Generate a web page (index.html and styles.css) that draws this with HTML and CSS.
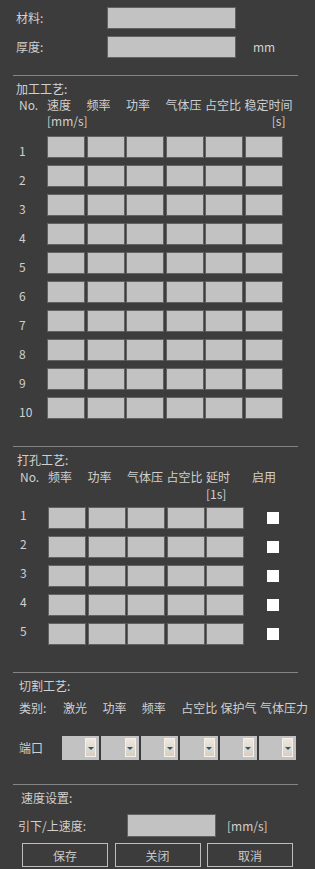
FILE: index.html
```html
<!DOCTYPE html>
<html lang="zh-CN">
<head>
    <meta charset="UTF-8">
    <title>工艺参数</title>
    <link rel="stylesheet" href="styles.css">
</head>
<body>
    <div class="form">
        <div class="form-row">
            <span class="form-label">材料:</span>
            <input class="field" type="text">
        </div>
        <div class="form-row">
            <span class="form-label">厚度:</span>
            <input class="field" type="text">
            <span class="unit">mm</span>
        </div>
    </div>

    <div class="divider"></div>

    <!-- 加工工艺 -->
    <div class="section-title process-title">加工工艺:</div>
    <div class="process-cols thead process-head">
        <span class="head-no">No.</span>
        <span>速度</span>
        <span>频率</span>
        <span>功率</span>
        <span>气体压</span>
        <span>占空比</span>
        <span>稳定时间</span>
    </div>
    <div class="process-cols thead thead-units">
        <span></span>
        <span>[mm/s]</span>
        <span></span>
        <span></span>
        <span></span>
        <span></span>
        <span class="head-end">[s]</span>
    </div>
    <div class="process-cols tbody process-body">
        <span class="num">1</span><input class="field" type="text"><input class="field" type="text"><input class="field" type="text"><input class="field" type="text"><input class="field" type="text"><input class="field" type="text">
        <span class="num">2</span><input class="field" type="text"><input class="field" type="text"><input class="field" type="text"><input class="field" type="text"><input class="field" type="text"><input class="field" type="text">
        <span class="num">3</span><input class="field" type="text"><input class="field" type="text"><input class="field" type="text"><input class="field" type="text"><input class="field" type="text"><input class="field" type="text">
        <span class="num">4</span><input class="field" type="text"><input class="field" type="text"><input class="field" type="text"><input class="field" type="text"><input class="field" type="text"><input class="field" type="text">
        <span class="num">5</span><input class="field" type="text"><input class="field" type="text"><input class="field" type="text"><input class="field" type="text"><input class="field" type="text"><input class="field" type="text">
        <span class="num">6</span><input class="field" type="text"><input class="field" type="text"><input class="field" type="text"><input class="field" type="text"><input class="field" type="text"><input class="field" type="text">
        <span class="num">7</span><input class="field" type="text"><input class="field" type="text"><input class="field" type="text"><input class="field" type="text"><input class="field" type="text"><input class="field" type="text">
        <span class="num">8</span><input class="field" type="text"><input class="field" type="text"><input class="field" type="text"><input class="field" type="text"><input class="field" type="text"><input class="field" type="text">
        <span class="num">9</span><input class="field" type="text"><input class="field" type="text"><input class="field" type="text"><input class="field" type="text"><input class="field" type="text"><input class="field" type="text">
        <span class="num">10</span><input class="field" type="text"><input class="field" type="text"><input class="field" type="text"><input class="field" type="text"><input class="field" type="text"><input class="field" type="text">
    </div>

    <div class="divider divider-wide"></div>

    <!-- 打孔工艺 -->
    <div class="section-title drill-title">打孔工艺:</div>
    <div class="drill-cols thead drill-head">
        <span class="head-no">No.</span>
        <span>频率</span>
        <span>功率</span>
        <span>气体压</span>
        <span>占空比</span>
        <span>延时</span>
        <span class="head-enable">启用</span>
    </div>
    <div class="drill-cols thead drill-units">
        <span></span>
        <span></span>
        <span></span>
        <span></span>
        <span></span>
        <span>[1s]</span>
        <span></span>
    </div>
    <div class="drill-cols tbody drill-body">
        <span class="num">1</span><input class="field" type="text"><input class="field" type="text"><input class="field" type="text"><input class="field" type="text"><input class="field" type="text"><input class="check" type="checkbox">
        <span class="num">2</span><input class="field" type="text"><input class="field" type="text"><input class="field" type="text"><input class="field" type="text"><input class="field" type="text"><input class="check" type="checkbox">
        <span class="num">3</span><input class="field" type="text"><input class="field" type="text"><input class="field" type="text"><input class="field" type="text"><input class="field" type="text"><input class="check" type="checkbox">
        <span class="num">4</span><input class="field" type="text"><input class="field" type="text"><input class="field" type="text"><input class="field" type="text"><input class="field" type="text"><input class="check" type="checkbox">
        <span class="num">5</span><input class="field" type="text"><input class="field" type="text"><input class="field" type="text"><input class="field" type="text"><input class="field" type="text"><input class="check" type="checkbox">
    </div>

    <div class="divider divider-wide"></div>

    <!-- 切割工艺 -->
    <div class="section-title cut-title">切割工艺:</div>
    <div class="cut-cols cut-head">
        <span class="cut-label">类别:</span>
        <span>激光</span>
        <span>功率</span>
        <span>频率</span>
        <span>占空比</span>
        <span>保护气</span>
        <span>气体压力</span>
    </div>
    <div class="cut-cols cut-ports">
        <span class="cut-label">端口</span>
        <div class="combo"><span class="combo-btn"></span></div>
        <div class="combo"><span class="combo-btn"></span></div>
        <div class="combo"><span class="combo-btn"></span></div>
        <div class="combo"><span class="combo-btn"></span></div>
        <div class="combo"><span class="combo-btn"></span></div>
        <div class="combo"><span class="combo-btn"></span></div>
    </div>

    <div class="divider divider-cut"></div>

    <!-- 速度设置 -->
    <div class="section-title speed-title">速度设置:</div>
    <div class="speed-row">
        <span class="speed-label">引下/上速度:</span>
        <input class="field" type="text">
        <span class="speed-unit">[mm/s]</span>
    </div>

    <div class="actions">
        <button class="action-btn">保存</button>
        <button class="action-btn">关闭</button>
        <button class="action-btn">取消</button>
    </div>
</body>
</html>
```

FILE: styles.css
```css
body {
    margin: 0;
    width: 315px;
    height: 869px;
    overflow: hidden;
    background-color: #3c3c3c;
    color: #d0d0d0;
    font-family: "Noto Sans CJK SC", "Noto Sans", sans-serif;
    font-size: 12px;
    line-height: 16px;
}
span {
    white-space: nowrap;
}
.field {
    box-sizing: border-box;
    height: 22px;
    margin: 0;
    padding: 0;
    border: 1px solid #626262;
    background: #c2c2c2;
    outline: none;
}
.form {
    padding-top: 7px;
}
.form-row {
    display: flex;
    align-items: center;
    height: 22px;
    padding-left: 16px;
}
.form-row + .form-row {
    margin-top: 7px;
}
.form-label {
    width: 91px;
}
.form-row .field {
    width: 129px;
}
.unit {
    margin-left: 17px;
}
.divider {
    height: 1px;
    margin: 17px 17px 0 13px;
    background: #858585;
}
.divider-wide {
    margin-top: 27px;
}
.divider-cut {
    margin-top: 24px;
}
.section-title {
    margin-top: 6px;
    padding-left: 16px;
    line-height: 14px;
}
.drill-title {
    padding-left: 17px;
}
.cut-title {
    padding-left: 19px;
}
.speed-title {
    padding-left: 21px;
}

/* tables */
.process-cols {
    display: grid;
    grid-template-columns: 45.5px repeat(6, 38px);
    column-gap: 1.5px;
}
.drill-cols {
    display: grid;
    grid-template-columns: 46.5px repeat(6, 38px);
    column-gap: 1.5px;
}
.thead {
    line-height: 14px;
}
.process-head {
    margin-top: 2px;
}
.head-no {
    padding-left: 19px;
}
.drill-cols .head-no {
    padding-left: 20px;
}
.thead-units {
    margin-top: 2px;
}
.head-end {
    justify-self: end;
    margin-right: -3px;
}
.tbody {
    row-gap: 7px;
}
.process-body {
    margin-top: 8px;
}
.tbody .field {
    width: 38px;
}
.num {
    padding-left: 19px;
    padding-top: 8px;
    line-height: 14px;
}
.drill-head {
    margin-top: 3px;
}
.drill-units {
    margin-top: 3px;
}
.drill-body {
    margin-top: 6px;
}
.drill-body .num {
    padding-left: 20px;
    padding-top: 1px;
    align-self: start;
}
.head-enable {
    margin-left: 6.5px;
}
.check {
    appearance: none;
    width: 12px;
    height: 12px;
    margin: 0 0 0 21.5px;
    align-self: center;
    background: #ffffff;
    border: none;
}

/* cut */
.cut-cols {
    display: grid;
    grid-template-columns: 60px repeat(6, 37.4px);
    column-gap: 2px;
    align-items: center;
}
.cut-label {
    padding-left: 19px;
}
.cut-head {
    margin-top: 7px;
}
.cut-head span + span {
    margin-left: 1px;
}
.cut-ports {
    margin-top: 20px;
}
.combo {
    box-sizing: border-box;
    display: flex;
    justify-content: flex-end;
    height: 24px;
    padding: 2px 3px 3px 0;
    background: #c2c2c2;
}
.combo-btn {
    box-sizing: border-box;
    display: flex;
    align-items: center;
    justify-content: center;
    width: 11px;
    height: 19px;
    padding-top: 2px;
    border: 1px solid #f6f1e8;
    background: linear-gradient(#eee8de, #d6cec1);
}
.combo-btn::after {
    content: "";
    border-left: 3px solid transparent;
    border-right: 3px solid transparent;
    border-top: 3px solid #1d5c8c;
}

/* speed */
.speed-row {
    display: flex;
    align-items: center;
    height: 23px;
    margin-top: 9px;
    padding-left: 18px;
}
.speed-label {
    width: 109px;
}
.speed-row .field {
    width: 89px;
    height: 23px;
}
.speed-unit {
    margin-left: 11px;
}
.actions {
    display: flex;
    gap: 6.5px;
    margin-top: 6px;
    padding-left: 22px;
}
.action-btn {
    box-sizing: border-box;
    width: 86px;
    height: 24px;
    padding: 0;
    border: 1px solid #bdbdbd;
    background: transparent;
    color: #c8c8c8;
    font-family: inherit;
    font-size: 12px;
}
```
